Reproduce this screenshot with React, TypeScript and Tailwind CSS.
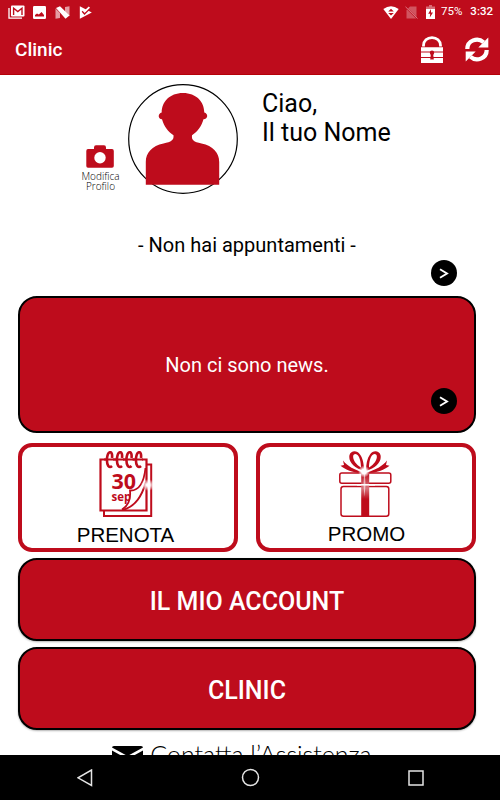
import React from 'react';

const GmailIcon = () => (
  <svg className="w-[17px] h-[15px]" viewBox="0 0 17 15" fill="none">
    <path d="M1 3v10.2h13" stroke="white" strokeWidth="1.3" />
    <rect x="3" y="0.5" width="13.5" height="11" rx="1" fill="white" />
    <path d="M5.6 10V3.2l4.2 3.4L14 3.2V10" stroke="#be0c1c" strokeWidth="1.4" />
  </svg>
);

const ImageIcon = () => (
  <svg className="w-[13px] h-[13px]" viewBox="0 0 13 13">
    <rect width="13" height="13" rx="1.2" fill="white" />
    <path d="M2 10.6V9l2-1.6 1.8 1.2L8.6 6l2.4 3v1.6z" fill="#be0c1c" />
  </svg>
);

const NougatIcon = () => (
  <svg className="w-[15px] h-[13px]" viewBox="0 0 15 13" fill="white">
    <path d="M.5 2.5 5 7v5l-4.5.8zM10 1l4.5-.8v10L10 6z" opacity="0.6" />
    <path d="M1 2 5 .2l9.500 9.300-4 3.300z" />
  </svg>
);

const PlayCheckIcon = () => (
  <svg className="w-[13px] h-[13px]" viewBox="0 0 13 13">
    <path d="M.8.2 12.800 6.500.8 12.800z" fill="white" />
    <path d="m3.200 5.200 2.300 2.600L10.500 3" fill="none" stroke="#be0c1c" strokeWidth="1.500" />
    <path d="m4.200 3.600 1.600 1.800L10.400 1.200" fill="none" stroke="white" strokeWidth="1.800" />
  </svg>
);

const WifiIcon = () => (
  <svg className="w-[16px] h-[13px]" viewBox="0 0 16 13">
    <path d="M.3 3Q8-2.600 15.700 3L8 13z" fill="white" />
    <path d="M5.200 5.500 8 2.800l2.800 2.700zM5.200 6.900h5.600L8 9.500z" fill="#be0c1c" />
  </svg>
);

const NoSimIcon = () => (
  <svg className="w-[13px] h-[13px]" viewBox="0 0 13 13">
    <path d="M5 .5h6.500v12h-10V4z" fill="white" opacity="0.3" />
    <path d="M.5 1 12.500 12.700" stroke="#be0c1c" strokeWidth="1.500" />
    <path d="M.5.8 12.500 12.500" stroke="white" strokeWidth="0.900" opacity="0.5" />
  </svg>
);

const BatteryIcon = () => (
  <svg className="w-[9px] h-[14px]" viewBox="0 0 9 14">
    <path d="M3 0h3v1.500h3V4H0V1.500h3z" fill="white" opacity="0.4" />
    <path d="M0 4h9v10H0z" fill="white" />
    <path d="M5 4 2.200 8.800h2L3.800 12.500 7 7.500H5z" fill="#be0c1c" />
  </svg>
);

const LockIcon = () => (
  <svg className="w-[22px] h-[27px]" viewBox="0 0 22 27">
    <path d="M2.500 10.500v-1C2.500 4.700 6.200 1.600 11 1.600s8.500 3.100 8.500 7.900v1" fill="none" stroke="white" strokeWidth="2.800" />
    <path d="M0 11.300h22v4.200H0zM0 16.500h22v4.400H0zM0 21.900h22V27H0z" fill="white" />
    <circle cx="11" cy="16.800" r="2.200" fill="#be0c1c" />
    <path d="M10 17h2l.8 6.500H9.200z" fill="#be0c1c" />
  </svg>
);

const RefreshIcon = () => (
  <svg className="w-[24px] h-[25px]" viewBox="0 0 24 25">
    <path d="M2.300 12C2.300 3.500 12.500-.3 18.600 5.200M21.700 13c0 8.500-10.200 12.300-16.300 6.800" fill="none" stroke="white" strokeWidth="4.200" />
    <path d="M23.300.5V10.400h-10zM.7 24.500V14.600h10z" fill="white" />
  </svg>
);

const CameraIcon = () => (
  <svg className="w-[28px] h-[23px]" viewBox="0 0 28 23">
    <path d="M2 4h6V2.500Q8 .3 10 .3h8q2 0 2 2.200V4h6q1.800 0 1.800 2v15q0 1.800-1.800 1.800H2Q.3 22.800.3 21V6Q.3 4 2 4z" fill="#be0c1c" />
    <circle cx="14" cy="12.800" r="5.700" fill="white" />
  </svg>
);

const Avatar = () => (
  <svg className="w-[110px] h-[110px]" viewBox="0 0 110 110">
    <circle cx="55" cy="55" r="54.300" fill="white" stroke="black" strokeWidth="1.200" />
    <path
      d="M55 9c-13.500 0-21.300 9-21.300 19.500-4 1-4 6.500.3 6.800 2 7 6 12.500 11.500 16 .5 5-2 6.500-10 8.200C24 62 17.800 68.500 17.800 78v22.800h73.400V78c0-9.500-6.200-16-17.700-18.500-8-1.700-10-3.200-9.500-8.200 5.500-3.500 9.500-9 11.500-16 4.800-.3 4.800-5.800.8-6.800C76.300 18 68.500 9 55 9z"
      fill="#be0c1c"
    />
  </svg>
);

const CalendarIcon = () => (
  <svg className="w-[56px] h-[66px]" viewBox="0 0 56 66">
    <defs>
      <radialGradient id="glow">
        <stop offset="0.2" stopColor="white" />
        <stop offset="1" stopColor="white" stopOpacity="0" />
      </radialGradient>
    </defs>
    <g fill="none" stroke="#be0c1c">
      <path d="M49 13.500h4.200v51.400H6V59" strokeWidth="2" />
      <path d="M2.500 8.500H48.500V59.500H2.500z" strokeWidth="2.200" />
    </g>
    {[9, 19, 28.500, 38].map((x) => (
      <g key={x} fill="none">
        <path d={`M${x - 1} 8.500h7`} stroke="white" strokeWidth="4" />
        <path d={`M${x - 3} 8.500h10`} stroke="#be0c1c" strokeWidth="2" />
        <path d={`M${x + 5} 7C${x + 6}-1 ${x + 1}-.5 ${x} 7c-.5 7 2 11 5 8`} stroke="#be0c1c" strokeWidth="2.600" />
      </g>
    ))}
    <text x="13.500" y="37.500" className="font-['Open_Sans'] font-bold" fontSize="21.500" fill="#be0c1c">30</text>
    <text x="13.500" y="50" className="font-['Open_Sans'] font-bold" fontSize="11.500" fill="#be0c1c">sep</text>
    <path d="M33 41c-.2 6-1.500 11-4 15C37 52 43 45 46.500 33c-3 6-7 8.500-13.500 8z" fill="white" />
    <g fill="none" stroke="#be0c1c">
      <path d="M24 59C38 56 44 44 48 31" strokeWidth="2" />
      <path d="M47.500 17C46 31 42 40 32 39.500c.8 8-1 15-8 19" strokeWidth="1.800" />
    </g>
    <ellipse cx="50" cy="34" rx="7.500" ry="6" fill="url(#glow)" />
  </svg>
);

const GiftIcon = () => (
  <svg className="w-[54px] h-[67px]" viewBox="0 0 54 67">
    <defs>
      <linearGradient id="ribbon" x1="0" y1="0" x2="0" y2="1">
        <stop offset="0" stopColor="#be0c1c" />
        <stop offset="0.350" stopColor="#d97880" />
        <stop offset="0.600" stopColor="#be0c1c" />
      </linearGradient>
      <radialGradient id="shine">
        <stop offset="0.400" stopColor="white" />
        <stop offset="1" stopColor="white" stopOpacity="0" />
      </radialGradient>
    </defs>
    <g fill="#be0c1c" fillRule="evenodd">
      <path d="M25 20C15 17 9 11 10.500 4 12-.5 18-1 21 3.500c3 4 4 10 4 16.500zM22 16.500c0-5-1.500-13.500-5.500-13.500-4.500 0-2.500 9 5.500 13.500z" />
      <path d="M27 20C37 17 43 11 41.500 4 40-.5 34-1 31 3.500c-3 4-4 10-4 16.500zM30 16.500c0-5 1.500-13.500 5.500-13.500 4.500 0 2.500 9-5.500 13.500z" />
      <path d="M24 21.500C16 19 8 15 4 9.500l1 4.500-3.500.8C7 19 13 21.500 22 22zM28 21.500c8-2.500 16-6.500 20-12L47 14l3.500.8C45 19 39 21.500 30 22z" />
    </g>
    <rect x="0.800" y="22" width="51" height="10.200" rx="2" fill="none" stroke="#be0c1c" strokeWidth="1.500" />
    <rect x="2" y="35.500" width="47.800" height="29.700" rx="2.500" fill="none" stroke="#be0c1c" strokeWidth="1.500" />
    <rect x="22.200" y="22" width="8" height="43.500" fill="url(#ribbon)" />
    <path d="M18 33.800h18" stroke="white" strokeWidth="1.600" />
    <circle cx="25" cy="20.500" r="6" fill="url(#shine)" />
    <path d="m25.500 14 1 20-1 12-1-12z" fill="white" opacity="0.600" />
  </svg>
);

const ArrowButton = () => (
  <button className="w-[26px] h-[26px] rounded-full bg-black flex items-center justify-center">
    <svg className="w-[10px] h-[11px]" viewBox="0 0 10 11">
      <path d="m1 1.300 7 4.200-7 4.200" fill="none" stroke="white" strokeWidth="1.900" />
    </svg>
  </button>
);

const BigButton = ({ label }: { label: string }) => (
  <button className="w-[458px] h-[83px] shrink-0 flex items-center justify-center rounded-[19px] border-2 border-black bg-[#be0c1c] text-white text-[25px] leading-none font-medium pt-[3px] shadow-[0_1px_2px_rgba(0,0,0,0.3)]">
    {label}
  </button>
);

export default function App() {
  return (
    <div className="w-[500px] h-[800px] overflow-hidden flex flex-col bg-white text-black font-[Roboto,sans-serif]">
      <header className="h-[75px] shrink-0 bg-[#be0c1c] border-b border-[#b50008] text-white">
        <div className="h-6 flex items-center justify-between pl-2 pr-[7px]">
          <div className="flex items-center">
            <GmailIcon />
            <div className="ml-2"><ImageIcon /></div>
            <div className="ml-[9px]"><NougatIcon /></div>
            <div className="ml-[9px]"><PlayCheckIcon /></div>
          </div>
          <div className="flex items-center">
            <WifiIcon />
            <div className="ml-[6px]"><NoSimIcon /></div>
            <div className="ml-2"><BatteryIcon /></div>
            <span className="ml-[6px] text-[11.500px] leading-none">75%</span>
            <span className="ml-[8px] text-[11.500px] leading-none font-medium">3:32</span>
          </div>
        </div>
        <div className="h-[50px] flex items-center justify-between pl-[15px] pr-[11px]">
          <h1 className="text-[19px] font-medium leading-none">Clinic</h1>
          <div className="flex items-center">
            <LockIcon />
            <div className="ml-[22px]"><RefreshIcon /></div>
          </div>
        </div>
      </header>

      <main className="h-[680px] shrink-0 overflow-hidden flex flex-col">
        <section className="h-[150px] shrink-0 flex items-start">
          <div className="w-[46px] ml-[77px] pt-[70px] flex flex-col items-center">
            <CameraIcon />
            <div className="mt-[4px] pl-[1px] text-center text-[10px] leading-[9.500px] font-['Open_Sans'] font-light">
              Modifica
              <br />
              Profilo
            </div>
          </div>
          <div className="ml-[5px] pt-[9px]"><Avatar /></div>
          <p className="ml-[24px] pt-[14px] text-[25px] leading-[29px]">
            Ciao,
            <br />
            Il tuo Nome
          </p>
        </section>

        <section className="h-[71px] shrink-0 flex flex-col">
          <p className="h-[35px] pt-[8px] pr-[6px] text-center text-[20px] leading-6">- Non hai appuntamenti -</p>
          <div className="flex justify-end pr-[43px]"><ArrowButton /></div>
        </section>

        <div className="flex-1 flex flex-col items-center pr-[6px]">
          <section className="w-[458px] h-[137px] shrink-0 rounded-[19px] border-2 border-black bg-[#be0c1c] text-white flex flex-col">
            <p className="h-[90px] pt-[55px] text-center text-[20px] leading-6">Non ci sono news.</p>
            <div className="flex justify-end pr-[17px]"><ArrowButton /></div>
          </section>

          <div className="w-[458px] mt-[10px] shrink-0 flex justify-between font-['Liberation_Sans',sans-serif]">
            <button className="w-[220px] h-[109px] rounded-[14px] border-[4px] border-[#be0c1c] flex flex-col items-center pt-[4px] pr-[5px]">
              <CalendarIcon />
              <span className="mt-[6px] text-[20.500px] leading-6">PRENOTA</span>
            </button>
            <button className="w-[220px] h-[109px] rounded-[14px] border-[4px] border-[#be0c1c] flex flex-col items-center pt-[4px]">
              <div className="pr-[1px]"><GiftIcon /></div>
              <span className="mt-[4px] pl-[1px] text-[20.500px] leading-6">PROMO</span>
            </button>
          </div>

          <div className="mt-[6px] flex flex-col gap-[6px]">
            <BigButton label="IL MIO ACCOUNT" />
            <BigButton label="CLINIC" />
          </div>

          <a className="mt-[9px] pr-[10px] flex items-start font-[Lato,sans-serif] font-light text-[25px] leading-[30px] whitespace-nowrap">
            <svg className="w-[31px] h-[22px] mt-[7px] mr-[7px]" viewBox="0 0 31 22">
              <path d="M2 0h27q2 0 2 1.500L15.500 10 0 1.500Q0 0 2 0zM0 4.500l10 5.500L0 19zM31 4.500l-10 5.500L31 19z" fill="black" />
            </svg>
            Contatta l’Assistenza
          </a>
        </div>
      </main>

      <nav className="h-[45px] shrink-0 bg-black flex items-center">
        <svg className="w-4 h-[18px] ml-[77px]" viewBox="0 0 16 18">
          <path d="M14.500 1v15.500L1 8.800z" fill="none" stroke="#e5e5e5" strokeWidth="1.500" />
        </svg>
        <svg className="w-[19px] h-[19px] ml-[148px]" viewBox="0 0 19 19">
          <circle cx="9.500" cy="9.500" r="8" fill="none" stroke="#e5e5e5" strokeWidth="1.500" />
        </svg>
        <svg className="w-4 h-4 ml-[148px]" viewBox="0 0 16 16">
          <rect x="1" y="1" width="14" height="14" fill="none" stroke="#e5e5e5" strokeWidth="1.500" />
        </svg>
      </nav>
    </div>
  );
}
